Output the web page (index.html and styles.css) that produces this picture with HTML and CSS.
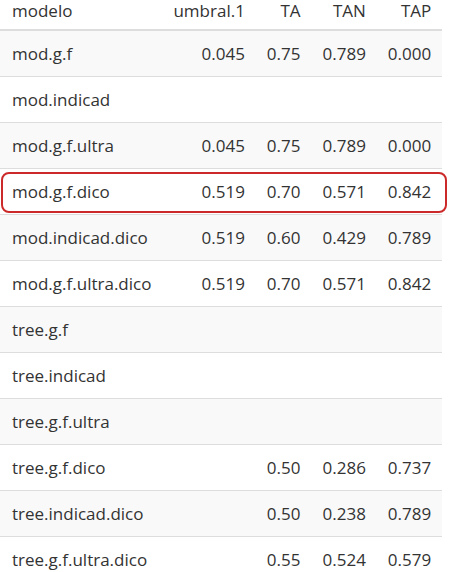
FILE: index.html
```html
<!DOCTYPE html>
<html>
<head>
<meta charset="utf-8">
<link rel="stylesheet" href="styles.css">
</head>
<body>
<div class="wrap">
<table class="tbl">
<thead>
<tr><th class="name">modelo</th><th>umbral.1</th><th>TA</th><th>TAN</th><th>TAP</th></tr>
</thead>
<tbody>
<tr><td class="name">mod.g.f</td><td>0.045</td><td>0.75</td><td>0.789</td><td>0.000</td></tr>
<tr><td class="name">mod.indicad</td><td></td><td></td><td></td><td></td></tr>
<tr><td class="name">mod.g.f.ultra</td><td>0.045</td><td>0.75</td><td>0.789</td><td>0.000</td></tr>
<tr><td class="name">mod.g.f.dico</td><td>0.519</td><td>0.70</td><td>0.571</td><td>0.842</td></tr>
<tr><td class="name">mod.indicad.dico</td><td>0.519</td><td>0.60</td><td>0.429</td><td>0.789</td></tr>
<tr><td class="name">mod.g.f.ultra.dico</td><td>0.519</td><td>0.70</td><td>0.571</td><td>0.842</td></tr>
<tr><td class="name">tree.g.f</td><td></td><td></td><td></td><td></td></tr>
<tr><td class="name">tree.indicad</td><td></td><td></td><td></td><td></td></tr>
<tr><td class="name">tree.g.f.ultra</td><td></td><td></td><td></td><td></td></tr>
<tr><td class="name">tree.g.f.dico</td><td></td><td>0.50</td><td>0.286</td><td>0.737</td></tr>
<tr><td class="name">tree.indicad.dico</td><td></td><td>0.50</td><td>0.238</td><td>0.789</td></tr>
<tr><td class="name">tree.g.f.ultra.dico</td><td></td><td>0.55</td><td>0.524</td><td>0.579</td></tr>
</tbody>
</table>
<div class="highlight"></div>
</div>
</body>
</html>
```
FILE: styles.css
```css
html, body {
  margin: 0;
  padding: 0;
  background: #fff;
}
.wrap {
  position: relative;
  width: 442px;
}
.tbl {
  width: 442px;
  border-collapse: collapse;
  font-family: "Open Sans", "Noto Sans", sans-serif;
  font-size: 17px;
  color: #333;
}
.tbl th, .tbl td {
  text-align: right;
  white-space: nowrap;
  width: 1%;
  padding: 12px 11px;
  line-height: 21px;
}
.tbl th {
  font-weight: normal;
  padding-top: 0;
  padding-bottom: 8px;
  border-bottom: 2px solid #ddd;
}
.tbl td {
  border-top: 1px solid #ddd;
}
.tbl .name {
  text-align: left;
  width: auto;
  padding-left: 12px;
}
.tbl tbody tr:nth-child(odd) {
  background: #f9f9f9;
}
.highlight {
  position: absolute;
  left: 1px;
  top: 172px;
  width: 442px;
  height: 37px;
  border: 2px solid #cc2a2a;
  border-radius: 8px;
}
```
